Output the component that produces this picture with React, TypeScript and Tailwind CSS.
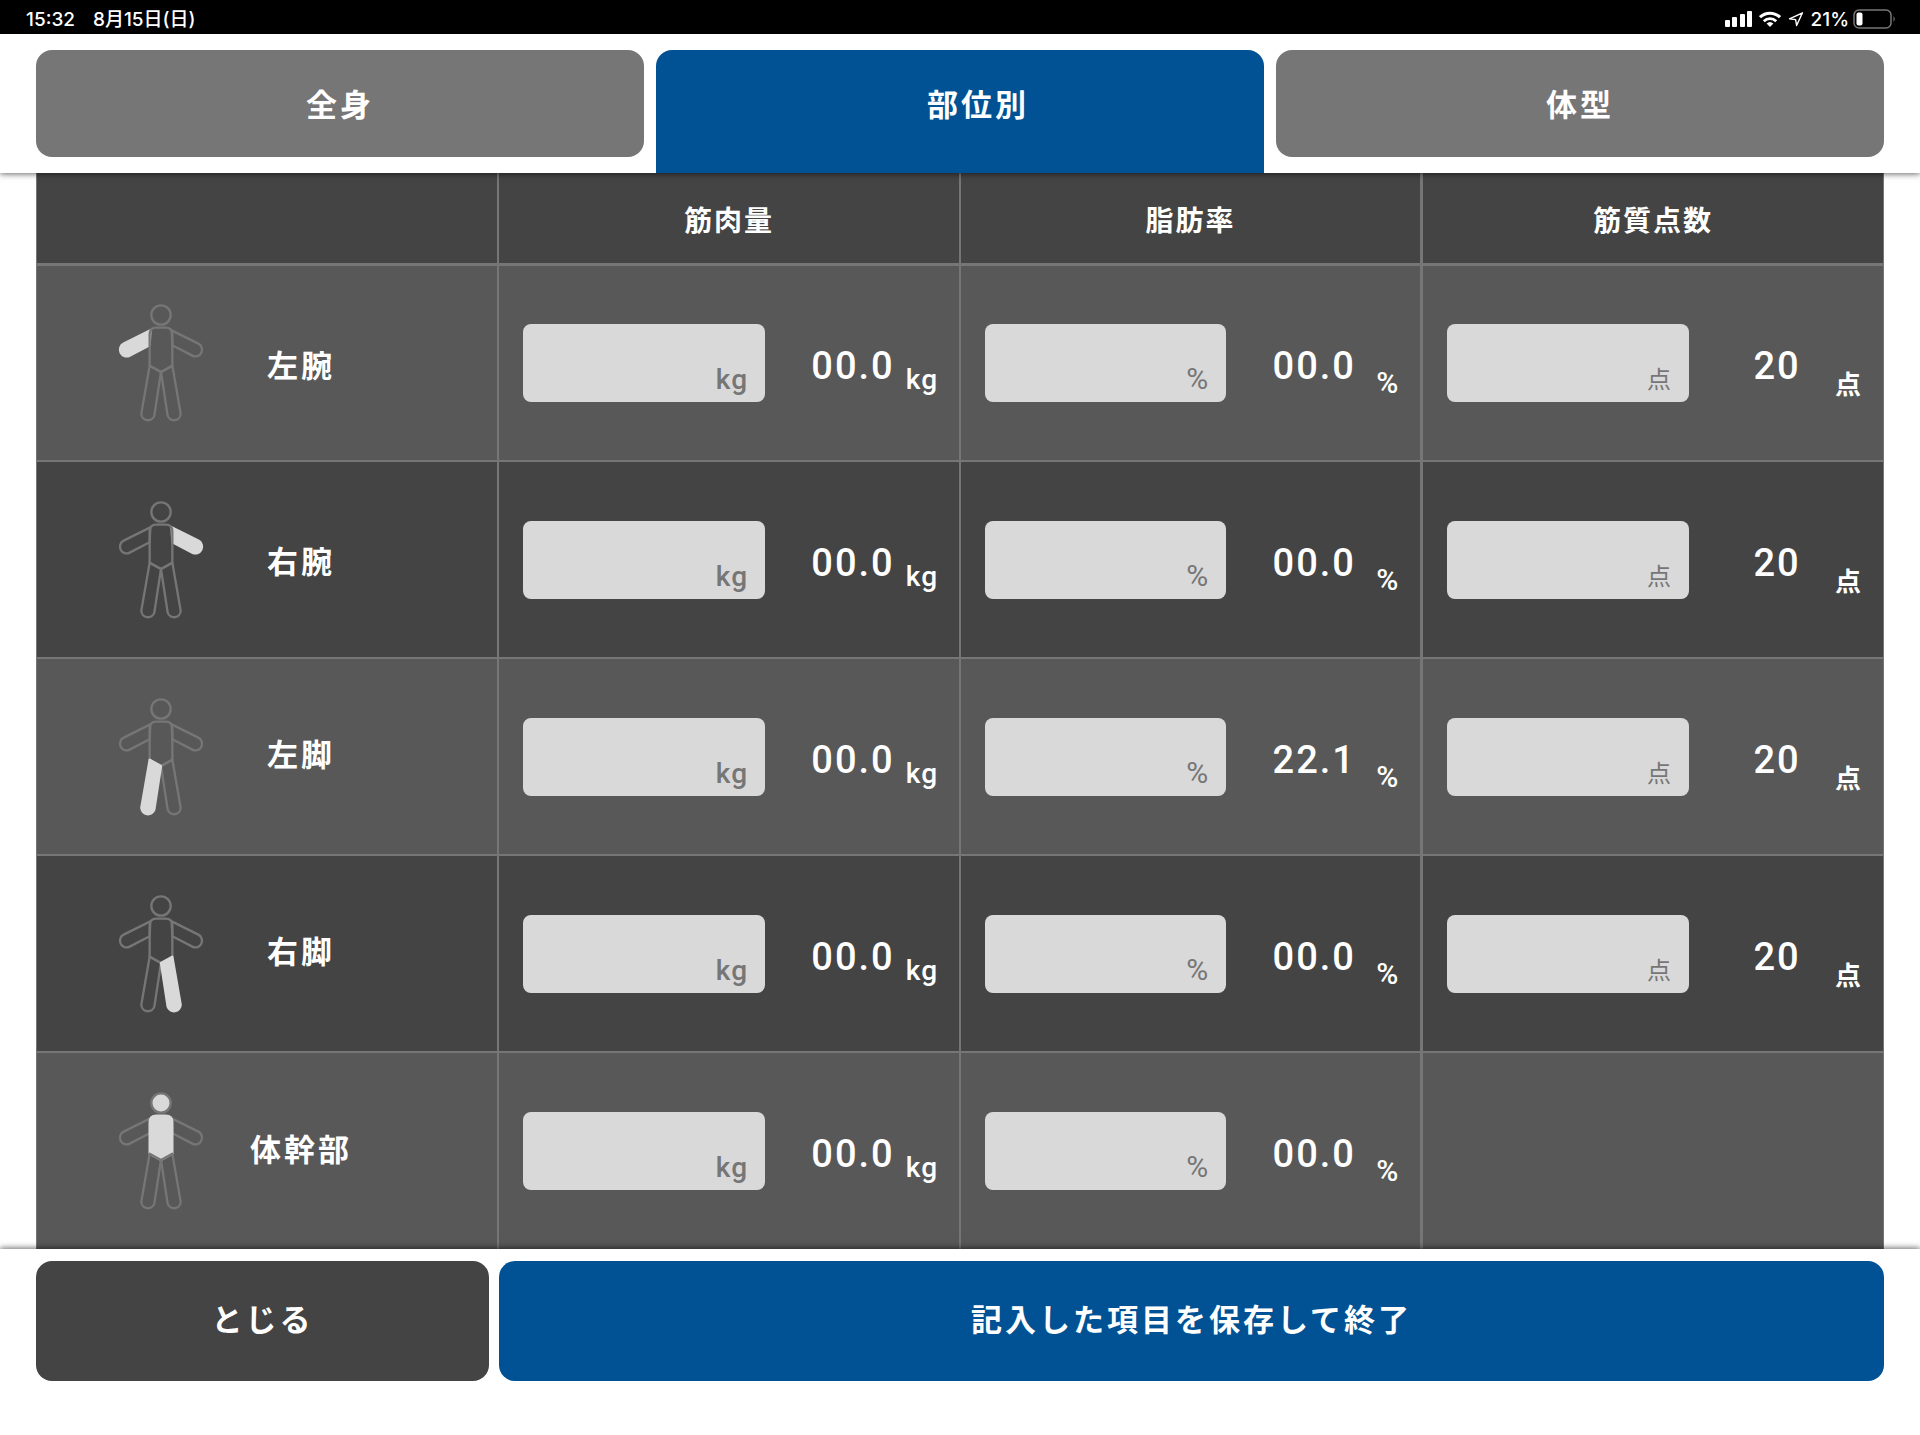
import React from 'react';
import { clsx } from 'clsx';

type Part = 'leftArm' | 'rightArm' | 'leftLeg' | 'rightLeg' | 'trunk';

interface Row {
  part: Part;
  label: string;
  muscle: string;
  fat: string;
  quality?: string;
}

const rows: Row[] = [
  { part: 'leftArm', label: '左腕', muscle: '00.0', fat: '00.0', quality: '20' },
  { part: 'rightArm', label: '右腕', muscle: '00.0', fat: '00.0', quality: '20' },
  { part: 'leftLeg', label: '左脚', muscle: '00.0', fat: '22.1', quality: '20' },
  { part: 'rightLeg', label: '右脚', muscle: '00.0', fat: '00.0', quality: '20' },
  { part: 'trunk', label: '体幹部', muscle: '00.0', fat: '00.0' },
];

const tabs = ['全身', '部位別', '体型'];

const columns = [
  { id: 'muscle', label: '筋肉量' },
  { id: 'fat', label: '脂肪率' },
  { id: 'quality', label: '筋質点数' },
];

const limbs: { part: Part; d: string }[] = [
  { part: 'leftArm', d: 'M153 127 L73 167 A20 20 0 0 0 91 203 L151 172 Z' },
  { part: 'rightArm', d: 'M217 127 L297 167 A20 20 0 0 1 279 203 L219 172 Z' },
  {
    part: 'trunk',
    d: 'M151 233 V139 Q151 119 171 119 H199 Q219 119 219 139 V233 L185 252 Z',
  },
  { part: 'leftLeg', d: 'M151 233 L126 377 A20 20 0 0 0 165 383 L185 252 Z' },
  { part: 'rightLeg', d: 'M219 233 L244 377 A20 20 0 0 1 205 383 L185 252 Z' },
];

const BodyFigure: React.FC<{ active: Part }> = ({ active }) => {
  // the highlighted leg goes last so the other outline doesn't cut into it
  const ordered = active.endsWith('Leg')
    ? [...limbs.filter((l) => l.part !== active), ...limbs.filter((l) => l.part === active)]
    : limbs;

  return (
    <svg viewBox="47 45 276 360" className="h-[120px] w-[92px] shrink-0" aria-hidden="true">
      <g strokeWidth="7" strokeLinejoin="round">
        <circle cx="185" cy="81" r="29" stroke="#767676" fill={active === 'trunk' ? '#d9d9d9' : 'none'} />
        {ordered.map(({ part, d }) => (
          <path
            key={part}
            d={d}
            fill={part === active ? '#d9d9d9' : 'none'}
            stroke={part === active ? '#d9d9d9' : '#767676'}
          />
        ))}
      </g>
    </svg>
  );
};

type Unit = 'kg' | '%' | '点';

interface MeasureCellProps {
  rowId: string;
  columnId: string;
  unit: Unit;
  value: string;
}

const placeholderStyles: Record<Unit, string> = {
  kg: 'bottom-2 text-[28px] font-medium',
  '%': 'bottom-2 text-[30px]',
  点: 'bottom-2.5 text-2xl',
};

const unitStyles: Record<Unit, string> = {
  kg: 'pb-2 text-[28px] font-medium',
  '%': 'pb-1 text-[30px] font-medium',
  点: 'pb-1 text-[26px] font-bold',
};

const MeasureCell: React.FC<MeasureCellProps> = ({ rowId, columnId, unit, value }) => (
  <div className="flex h-[78px] items-end pl-6 pr-[21px]">
    <label className="relative block h-full min-w-0 flex-1">
      <input
        type="text"
        inputMode="decimal"
        aria-labelledby={`${rowId} ${columnId}`}
        className="h-full w-full rounded-lg bg-[#d9d9d9] pl-4 pr-16 text-[38px] text-[#444444] outline-none"
      />
      <span
        className={clsx(
          'pointer-events-none absolute right-[17px] leading-none tracking-[1px] text-[#767676]',
          placeholderStyles[unit]
        )}
      >
        {unit}
      </span>
    </label>
    <span className="ml-10 w-24 shrink-0 whitespace-nowrap pb-[17px] text-center text-[38px] font-medium leading-none">
      {value}
    </span>
    <span
      className={clsx(
        'flex w-[37px] shrink-0 justify-end leading-none tracking-[1px]',
        unitStyles[unit]
      )}
    >
      {unit}
    </span>
  </div>
);

const StatusBar: React.FC = () => (
  <div className="flex h-[34px] items-center justify-between bg-black pl-[26px] pr-6 pt-1 font-['Inter','Noto_Sans_CJK_JP',sans-serif] text-[19px] font-medium leading-none tracking-normal text-white">
    <div className="flex gap-[18px]">
      <span>15:32</span>
      <span>8月15日(日)</span>
    </div>
    <div className="flex items-center gap-[7px]">
      <svg viewBox="0 0 27 17" className="h-[17px] w-[27px]" fill="white" aria-hidden="true">
        <rect x="0" y="9" width="5" height="7" rx="1" />
        <rect x="7" y="6" width="5" height="10" rx="1" />
        <rect x="15" y="3" width="5" height="13" rx="1" />
        <rect x="22" y="0" width="5" height="16" rx="1" />
      </svg>
      <svg viewBox="0 0 22 17" className="h-[17px] w-[22px]" fill="none" stroke="white" aria-hidden="true">
        <path d="M1 6.2 a14.5 14.5 0 0 1 20 0" strokeWidth="3" />
        <path d="M4.8 10.2 a9 9 0 0 1 12.4 0" strokeWidth="2.8" />
        <path d="M11 16 L7.6 12.6 a5 5 0 0 1 6.8 0 Z" fill="white" stroke="none" />
      </svg>
      <svg viewBox="0 0 16 16" className="h-4 w-4" fill="none" stroke="white" strokeWidth="1.4" strokeLinejoin="round" aria-hidden="true">
        <path d="M14.5 1.8 L1.5 7.8 L7.6 8.6 L8.6 14.5 Z" />
      </svg>
      <span>21%</span>
      <svg viewBox="0 0 43 20" className="-ml-[3px] h-5 w-[43px]" aria-hidden="true">
        <rect x="1" y="1" width="37" height="18" rx="5" fill="none" stroke="#777" strokeWidth="1.5" />
        <rect x="3.5" y="3.5" width="6" height="13" rx="2" fill="white" />
        <path d="M40.5 7 q2.5 3 0 6 Z" fill="#777" />
      </svg>
    </div>
  </div>
);

export default function App() {
  return (
    <div className="flex min-h-screen flex-col bg-white font-['Roboto','Noto_Sans_CJK_JP',sans-serif] tracking-[2px] text-white">
      <StatusBar />

      <nav className="relative z-10 grid grid-cols-3 items-start gap-3 bg-white px-9 pt-4 shadow-[0_1px_6px_rgba(0,0,0,0.6)]">
        {tabs.map((tab, i) => (
          <button
            key={tab}
            type="button"
            className={clsx(
              'text-[31px] font-bold leading-none tracking-[3px]',
              i === 1
                ? 'h-[123px] rounded-t-2xl bg-[#005294] pb-3 pl-9'
                : 'mb-4 h-[107px] rounded-2xl bg-[#767676] pt-1'
            )}
          >
            {tab}
          </button>
        ))}
      </nav>

      <main className="px-9">
        <table className="w-full table-fixed border-collapse border-x border-[#767676]">
          <thead>
            <tr className="h-[91px] border-b-[3px] border-[#767676] bg-[#444444]">
              <td className="border-r-2 border-[#767676]" />
              {columns.map((column, i) => (
                <th
                  key={column.id}
                  id={column.id}
                  scope="col"
                  className={clsx(
                    'border-[#767676] p-0 pt-2 text-[28px] font-bold',
                    i === 0 && 'border-r-2',
                    i === 1 && 'border-r-[3px]'
                  )}
                >
                  {column.label}
                </th>
              ))}
            </tr>
          </thead>
          <tbody>
            {rows.map((row) => (
              <tr
                key={row.part}
                className="h-[197px] border-b-2 border-[#767676] last:border-b-0 odd:bg-[#585858] even:bg-[#444444]"
              >
                <th scope="row" className="border-r-2 border-[#767676] p-0">
                  <div className="flex items-center pl-[78px]">
                    <BodyFigure active={row.part} />
                    <span
                      id={row.part}
                      className={clsx(
                        'w-[188px] text-center text-[31px] font-bold tracking-[3px]',
                        row.part.endsWith('Arm') && 'pt-2'
                      )}
                    >
                      {row.label}
                    </span>
                  </div>
                </th>
                <td className="border-r-2 border-[#767676] p-0">
                  <MeasureCell rowId={row.part} columnId="muscle" unit="kg" value={row.muscle} />
                </td>
                <td className="border-r-[3px] border-[#767676] p-0">
                  <MeasureCell rowId={row.part} columnId="fat" unit="%" value={row.fat} />
                </td>
                <td className="p-0">
                  {row.quality && (
                    <MeasureCell rowId={row.part} columnId="quality" unit="点" value={row.quality} />
                  )}
                </td>
              </tr>
            ))}
          </tbody>
        </table>
      </main>

      <footer className="relative z-10 flex flex-1 items-start gap-[10px] bg-white px-9 pt-3 shadow-[0_-1px_6px_rgba(0,0,0,0.6)]">
        <button
          type="button"
          className="h-[120px] w-[453px] rounded-2xl bg-[#444444] text-[31px] font-bold tracking-[3px]"
        >
          とじる
        </button>
        <button
          type="button"
          className="h-[120px] flex-1 rounded-2xl bg-[#005294] text-[31px] font-bold tracking-[3px]"
        >
          記入した項目を保存して終了
        </button>
      </footer>
    </div>
  );
}
